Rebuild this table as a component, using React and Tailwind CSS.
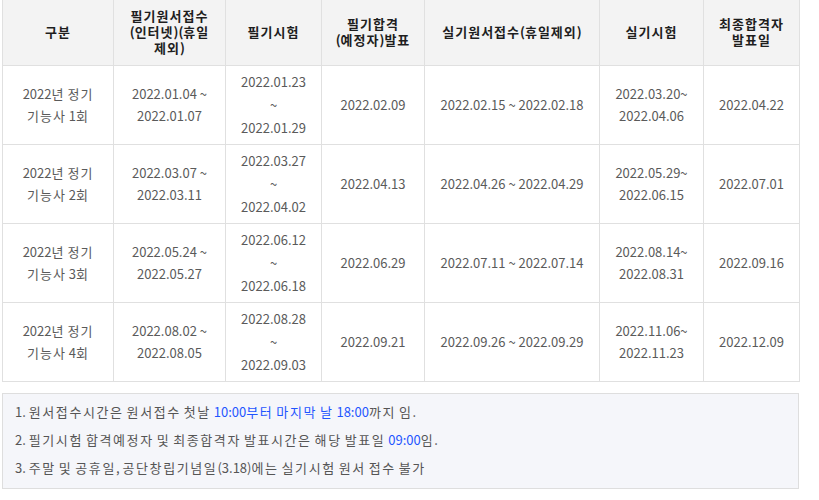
const headers = [
  ["구분"],
  ["필기원서접수", "(인터넷)(휴일", "제외)"],
  ["필기시험"],
  ["필기합격", "(예정자)발표"],
  ["실기원서접수(휴일제외)"],
  ["실기시험"],
  ["최종합격자", "발표일"],
];

const rows = [
  {
    name: ["2022년 정기", "기능사 1회"],
    writeApply: ["2022.01.04 ~", "2022.01.07"],
    writeExam: ["2022.01.23", "~", "2022.01.29"],
    writePass: "2022.02.09",
    practApply: "2022.02.15 ~ 2022.02.18",
    practExam: ["2022.03.20~", "2022.04.06"],
    final: "2022.04.22",
  },
  {
    name: ["2022년 정기", "기능사 2회"],
    writeApply: ["2022.03.07 ~", "2022.03.11"],
    writeExam: ["2022.03.27", "~", "2022.04.02"],
    writePass: "2022.04.13",
    practApply: "2022.04.26 ~ 2022.04.29",
    practExam: ["2022.05.29~", "2022.06.15"],
    final: "2022.07.01",
  },
  {
    name: ["2022년 정기", "기능사 3회"],
    writeApply: ["2022.05.24 ~", "2022.05.27"],
    writeExam: ["2022.06.12", "~", "2022.06.18"],
    writePass: "2022.06.29",
    practApply: "2022.07.11 ~ 2022.07.14",
    practExam: ["2022.08.14~", "2022.08.31"],
    final: "2022.09.16",
  },
  {
    name: ["2022년 정기", "기능사 4회"],
    writeApply: ["2022.08.02 ~", "2022.08.05"],
    writeExam: ["2022.08.28", "~", "2022.09.03"],
    writePass: "2022.09.21",
    practApply: "2022.09.26 ~ 2022.09.29",
    practExam: ["2022.11.06~", "2022.11.23"],
    final: "2022.12.09",
  },
];

// hangul runs get a bit of tracking so they take the width of the original font
const K = ({text, wide = false}) =>
  text.split(/([\uac00-\ud7a3]+)/).map((part, i) =>
    /[\uac00-\ud7a3]/.test(part) ? (
      <span key={i} className={wide ? "tracking-[1.6px]" : "tracking-[1px]"}>{part}</span>
    ) : (
      part
    )
  );

const Lines = ({lines, leading = "leading-[22px]"}) => (
  <div className={leading}>
    {lines.map((l, i) => (
      <div key={i}><K text={l} /></div>
    ))}
  </div>
);

const cell = "border border-[#e0e0e0] text-center align-middle px-1";

export default function App() {
  return (
    <div
      className="bg-white w-[819px] h-[500px] pl-[2px] text-[13px] text-[#5a5a5a]"
      style={{fontFamily: '"Noto Sans CJK KR", "Noto Sans", sans-serif'}}
    >
      <table className="w-[797px] border-collapse table-fixed">
        <colgroup>
          <col className="w-[111px]" />
          <col className="w-[112px]" />
          <col className="w-[96px]" />
          <col className="w-[103px]" />
          <col className="w-[175px]" />
          <col className="w-[104px]" />
          <col className="w-[96px]" />
        </colgroup>
        <thead>
          <tr className="h-[65px] bg-[#f3f3f3]">
            {headers.map((h, i) => (
              <th key={i} className={`${cell} border-t-0 font-bold text-[#1e1e1e]`}>
                <Lines lines={h} leading="leading-[16px]" />
              </th>
            ))}
          </tr>
        </thead>
        <tbody>
          {rows.map((r, i) => (
            <tr key={i} className="h-[79px]">
              <td className={cell}><Lines lines={r.name} /></td>
              <td className={cell}><Lines lines={r.writeApply} /></td>
              <td className={cell}><Lines lines={r.writeExam} leading="leading-[23px]" /></td>
              <td className={cell}>{r.writePass}</td>
              <td className={cell}>{r.practApply}</td>
              <td className={cell}><Lines lines={r.practExam} /></td>
              <td className={cell}>{r.final}</td>
            </tr>
          ))}
        </tbody>
      </table>

      <div className="mt-[11px] w-[797px] h-[96px] border border-[#dedede] bg-[#f5f6fa] pl-[12px] pt-[4px] text-[13px] leading-[28px] text-[#555]">
        <p>
          <K text="1. 원서접수시간은 원서접수 첫날 " wide />
          <span className="text-[#1f55ff]"><K text="10:00부터 마지막 날 18:00" wide /></span>
          <K text="까지 임." wide />
        </p>
        <p>
          <K text="2. 필기시험 합격예정자 및 최종합격자 발표시간은 해당 발표일 " wide />
          <span className="text-[#1f55ff]">09:00</span>
          <K text="임." wide />
        </p>
        <p><K text="3. 주말 및 공휴일, 공단창립기념일(3.18)에는 실기시험 원서 접수 불가" wide /></p>
      </div>
    </div>
  );
}
